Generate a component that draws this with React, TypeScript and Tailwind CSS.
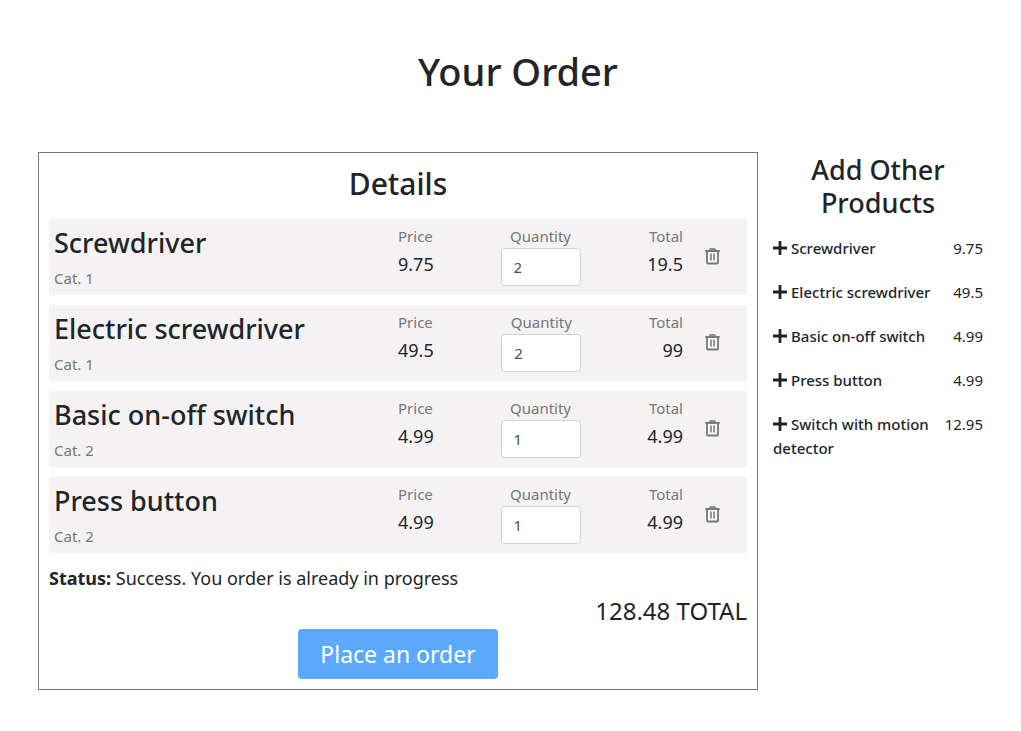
import { useState } from "react";

type Line = { name: string; category: number; price: number; quantity: number };

const initialLines: Line[] = [
  { name: "Screwdriver", category: 1, price: 9.75, quantity: 2 },
  { name: "Electric screwdriver", category: 1, price: 49.5, quantity: 2 },
  { name: "Basic on-off switch", category: 2, price: 4.99, quantity: 1 },
  { name: "Press button", category: 2, price: 4.99, quantity: 1 },
];

const products = [
  { name: "Screwdriver", category: 1, price: 9.75 },
  { name: "Electric screwdriver", category: 1, price: 49.5 },
  { name: "Basic on-off switch", category: 2, price: 4.99 },
  { name: "Press button", category: 2, price: 4.99 },
  { name: "Switch with motion detector", category: 2, price: 12.95 },
];

const round = (n: number) => Math.round(n * 100) / 100;

function TrashIcon() {
  return (
    <svg width="15" height="17" viewBox="0 0 15 17" fill="none" aria-hidden="true">
      <path d="M4.500 3V1.500Q4.500 0.700 5.300 0.700H9.700Q10.500 0.700 10.500 1.500V3Z" fill="#999" stroke="#777" />
      <path d="M0.500 3H14.500" stroke="#777" strokeWidth="1.800" />
      <path d="M2 3.500V14.500Q2 15.500 3 15.500H12Q13 15.500 13 14.500V3.500" fill="#f7f7f7" stroke="#777" strokeWidth="1.800" />
      <path d="M0.500 3H14.500" stroke="#777" strokeWidth="1.800" />
      <path d="M6 5.500V12.500M9 5.500V12.500" stroke="#777" strokeWidth="1.500" />
    </svg>
  );
}

function PlusIcon() {
  return (
    <svg className="mr-1 mb-1 inline-block" width="14" height="14" viewBox="0 0 14 14" aria-hidden="true">
      <path d="M7 0V14M0 7H14" stroke="#212529" strokeWidth="2.800" />
    </svg>
  );
}

export default function App() {
  const [lines, setLines] = useState(initialLines);
  const total = round(lines.reduce((sum, l) => sum + l.price * l.quantity, 0));

  const setQuantity = (index: number, quantity: number) =>
    setLines(lines.map((l, i) => (i === index ? { ...l, quantity } : l)));

  const add = (p: (typeof products)[number]) =>
    setLines(
      lines.some((l) => l.name === p.name)
        ? lines.map((l) => (l.name === p.name ? { ...l, quantity: l.quantity + 1 } : l))
        : [...lines, { ...p, quantity: 1 }],
    );

  return (
    <main className="pt-12 pr-[23px] pb-10 pl-[38px] font-['Noto_Sans',sans-serif] text-[15px] leading-6 text-[#212529]">
      <h1 className="mb-[58px] text-center text-[38px] leading-[46px] font-medium">Your Order</h1>
      <div className="grid grid-cols-[3fr_1fr] items-start">
        <section className="border border-[#777] p-2.5">
          <h2 className="mb-3.5 text-center text-[30px] leading-[42px] font-medium">Details</h2>
          <ul className="flex flex-col gap-2.5">
            {lines.map((line, i) => (
              <li key={line.name} className="flex h-19 bg-[#f4f2f3] px-[5px] pt-[5px]">
                <div className="w-1/2">
                  <h3 className="text-[27px] leading-[38px] font-medium">{line.name}</h3>
                  <p className="text-[15px] leading-8 text-[#777]">Cat. {line.category}</p>
                </div>
                <div className="flex flex-1 justify-between">
                  <div>
                    <p className="text-[#777]">Price</p>
                    <p className="text-lg leading-8">{line.price}</p>
                  </div>
                  <div className="flex flex-col items-center">
                    <label htmlFor={`quantity-${i}`} className="text-[#777]">
                      Quantity
                    </label>
                    <input
                      id={`quantity-${i}`}
                      inputMode="numeric"
                      value={line.quantity}
                      onChange={(e) => setQuantity(i, Number(e.target.value) || 0)}
                      className="h-[38px] w-20 rounded border border-[#ced4da] bg-white px-3 text-[15px] text-[#495057]"
                    />
                  </div>
                  <div className="text-right">
                    <p className="text-[#777]">Total</p>
                    <p className="text-lg leading-8">{round(line.price * line.quantity)}</p>
                  </div>
                </div>
                <button
                  type="button"
                  aria-label={`Remove ${line.name}`}
                  onClick={() => setLines(lines.filter((_, j) => j !== i))}
                  className="mx-[22px] mt-6 self-start"
                >
                  <TrashIcon />
                </button>
              </li>
            ))}
          </ul>
          <p className="mt-2.5 text-lg leading-[30px]">
            <strong>Status:</strong> Success. You order is already in progress
          </p>
          <p className="text-right text-2xl leading-9">{total} TOTAL</p>
          <button
            type="button"
            className="mx-auto block h-[50px] w-[200px] rounded bg-[#5aa9ff] text-[23px] text-white"
          >
            Place an order
          </button>
        </section>
        <aside className="px-[15px]">
          <h2 className="mt-px mb-[17px] text-center text-[27px] leading-[33px] font-medium">Add Other Products</h2>
          <ul className="flex flex-col gap-5">
            {products.map((p) => (
              <li key={p.name} className="flex items-start justify-between">
                <button type="button" onClick={() => add(p)} className="text-left font-medium">
                  <PlusIcon />
                  {p.name}
                </button>
                <span>{p.price}</span>
              </li>
            ))}
          </ul>
        </aside>
      </div>
    </main>
  );
}
